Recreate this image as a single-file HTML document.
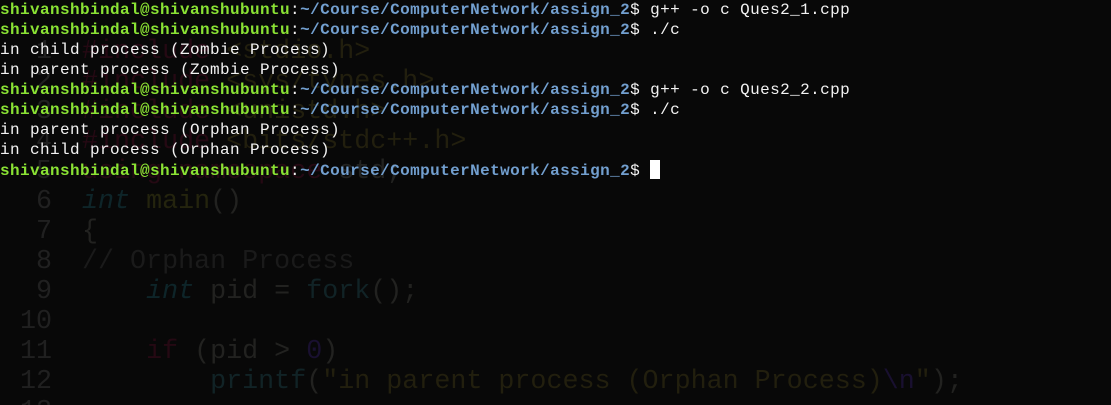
<!DOCTYPE html>
<html><head><style>
html,body{margin:0;padding:0;background:#080808;width:1111px;height:405px;overflow:hidden;position:relative}
.code{position:absolute;left:0;top:7px;font-family:"Liberation Mono",monospace;font-size:26.7px;line-height:30px;white-space:pre;color:#222220}
.code .ln{display:inline-block;width:52px;text-align:right;color:#202020;margin-right:30px}
.k{color:#0e2529;font-style:italic}.f{color:#24240e}.c{color:#1a1a1a}.r{color:#250913}.s{color:#221f0e}.n{color:#191030}.b{color:#112326}
.term{position:absolute;left:0;top:0;font-family:"Liberation Mono",monospace;font-size:16px;letter-spacing:0.4px;line-height:20px;white-space:pre;color:#f2f2f2}
.g{color:#8ae234;font-weight:bold}.u{color:#729fcf;font-weight:bold}
.cur{display:inline-block;width:10px;height:19px;background:#fff;vertical-align:-4px}
</style></head><body>
<div class="code"><span class="ln"> </span>
<span class="ln">1</span><span class="r">#include</span> <span class="s">&lt;stdio.h&gt;</span>
<span class="ln">2</span><span class="r">#include</span> <span class="s">&lt;sys/types.h&gt;</span>
<span class="ln">3</span><span class="r">#include</span> <span class="s">&lt;unistd.h&gt;</span>
<span class="ln">4</span><span class="r">#include</span> <span class="s">&lt;bits/stdc++.h&gt;</span>
<span class="ln">5</span><span class="r">using namespace</span> std;
<span class="ln">6</span><span class="k">int</span> <span class="f">main</span>()
<span class="ln">7</span>{
<span class="ln">8</span><span class="c">// Orphan Process</span>
<span class="ln">9</span>    <span class="k">int</span> pid = <span class="b">fork</span>();
<span class="ln">10</span>
<span class="ln">11</span>    <span class="r">if</span> (pid &gt; <span class="n">0</span>)
<span class="ln">12</span>        <span class="b">printf</span>(<span class="s">"in parent process (Orphan Process)</span><span class="n">\n</span><span class="s">"</span>);
<span class="ln">13</span></div>
<div class="term"><span class="g">shivanshbindal@shivanshubuntu</span>:<span class="u">~/Course/ComputerNetwork/assign_2</span>$ g++ -o c Ques2_1.cpp
<span class="g">shivanshbindal@shivanshubuntu</span>:<span class="u">~/Course/ComputerNetwork/assign_2</span>$ ./c
in child process (Zombie Process)
in parent process (Zombie Process)
<span class="g">shivanshbindal@shivanshubuntu</span>:<span class="u">~/Course/ComputerNetwork/assign_2</span>$ g++ -o c Ques2_2.cpp
<span class="g">shivanshbindal@shivanshubuntu</span>:<span class="u">~/Course/ComputerNetwork/assign_2</span>$ ./c
in parent process (Orphan Process)
in child process (Orphan Process)
<span class="g">shivanshbindal@shivanshubuntu</span>:<span class="u">~/Course/ComputerNetwork/assign_2</span>$ <span class="cur"></span></div>
</body></html>
